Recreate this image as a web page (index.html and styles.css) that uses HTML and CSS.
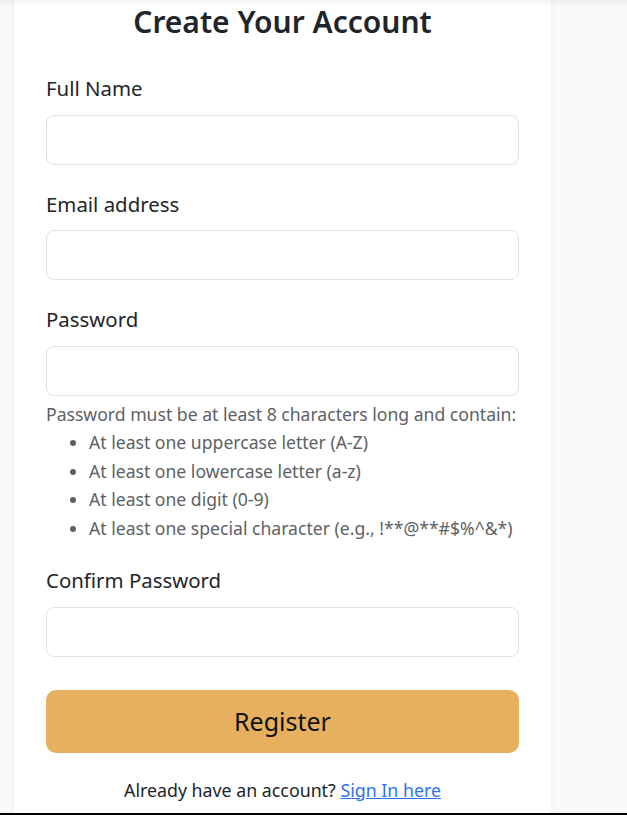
FILE: index.html
```html
<!DOCTYPE html>
<html lang="en">
<head>
<meta charset="utf-8">
<title>Create Your Account</title>
<link rel="stylesheet" href="styles.css">
</head>
<body>
<div class="page">
  <div class="card">
    <h2 class="title">Create Your Account</h2>
    <form class="form">
      <div class="group">
        <label class="label" for="name">Full Name</label>
        <input class="input" id="name" type="text">
      </div>
      <div class="group">
        <label class="label" for="email">Email address</label>
        <input class="input" id="email" type="email">
      </div>
      <div class="group">
        <label class="label" for="pw">Password</label>
        <input class="input" id="pw" type="password">
        <div class="help">
          <p class="help-lead">Password must be at least 8 characters long and contain:</p>
          <ul class="help-list">
            <li>At least one uppercase letter (A-Z)</li>
            <li>At least one lowercase letter (a-z)</li>
            <li>At least one digit (0-9)</li>
            <li>At least one special character (e.g., !**@**#$%^&amp;*)</li>
          </ul>
        </div>
      </div>
      <div class="group">
        <label class="label" for="pw2">Confirm Password</label>
        <input class="input" id="pw2" type="password">
      </div>
      <button class="btn" type="button">Register</button>
      <p class="signin">Already have an account? <a href="#" class="link">Sign In here</a></p>
    </form>
  </div>
</div>
</body>
</html>
```

FILE: styles.css
```css
* { box-sizing: border-box; }

html, body {
  margin: 0;
  padding: 0;
}

body {
  background: #f8f9fa;
  font-family: "Noto Sans", "Open Sans", sans-serif;
  color: #212529;
  overflow: hidden;
  height: 815px;
}

body::before {
  content: "";
  position: fixed;
  top: 0;
  left: 0;
  right: 0;
  height: 6px;
  background: linear-gradient(rgba(0,0,0,0.045), rgba(0,0,0,0));
  z-index: 5;
}

body::after {
  content: "";
  position: fixed;
  bottom: 0;
  left: 0;
  right: 0;
  height: 2px;
  background: #000;
  z-index: 5;
}

.page {
  padding-left: 14px;
}

.card {
  width: 537px;
  background: #fff;
  padding: 2px 32px 40px;
  box-shadow: 0 0 6px rgba(0, 0, 0, 0.06);
  min-height: 815px;
}

.title {
  margin: 0 0 30px;
  text-align: center;
  font-size: 30px;
  font-weight: 600;
  line-height: 40px;
  color: #212529;
}

.form {
  display: flex;
  flex-direction: column;
}

.group {
  display: flex;
  flex-direction: column;
  margin-bottom: 23px;
}

.label {
  font-size: 20.4px;
  line-height: 33px;
  margin-bottom: 9.5px;
}

.input {
  height: 50px;
  width: 100%;
  border: 1px solid #dee2e6;
  border-radius: 8px;
  background: #fff;
  font: inherit;
  padding: 8px 16px;
}

.help {
  margin-top: 4px;
  font-size: 17.6px;
  line-height: 28.5px;
  color: #5c6166;
}

.help-lead {
  margin: 0;
}

.help-list {
  margin: 0 0 -1px;
  padding-left: 43px;
}

.btn {
  margin-top: 10px;
  height: 63px;
  width: 100%;
  border: none;
  border-radius: 10px;
  background: #e7b05e;
  color: #111;
  font-family: inherit;
  font-size: 25px;
}

.signin {
  margin: 22px 0 0;
  text-align: center;
  font-size: 17.8px;
  line-height: 30px;
  color: #212529;
}

.link {
  color: #2f72f0;
  text-decoration: underline;
}
```
